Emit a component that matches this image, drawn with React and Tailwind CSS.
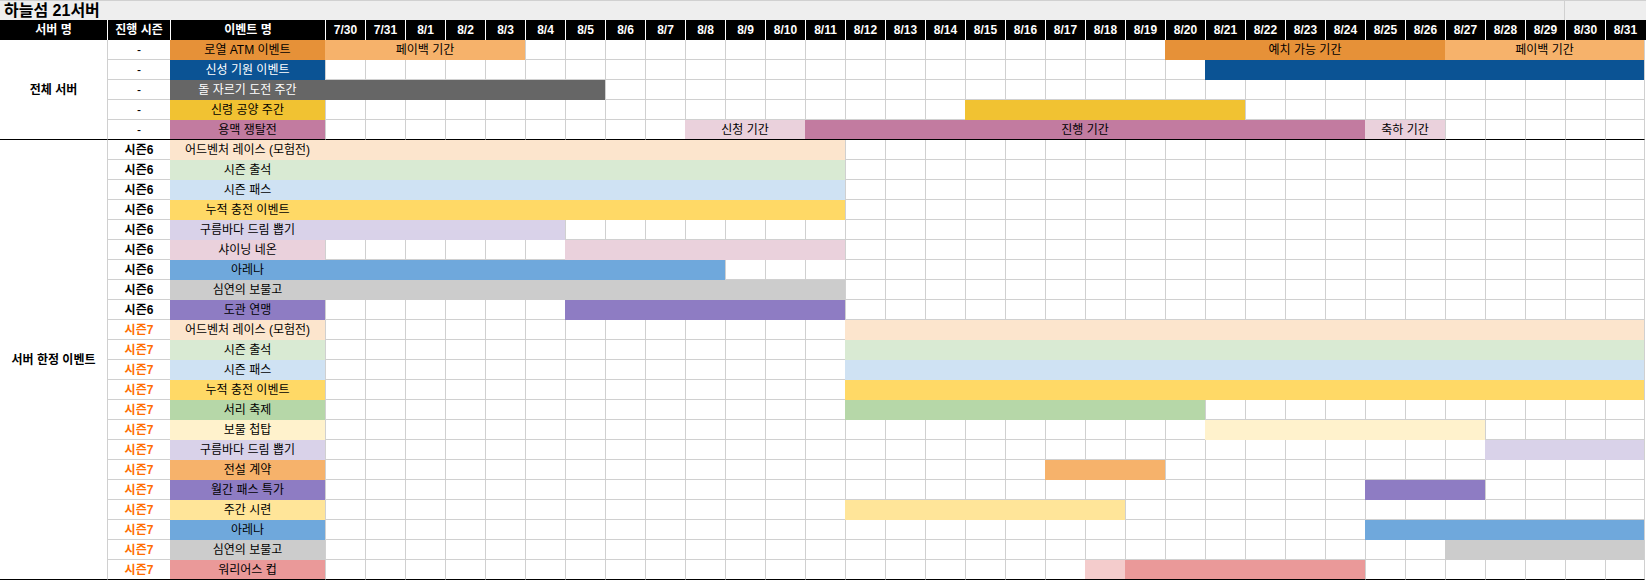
import React from "react";

const days = ["7/30", "7/31", ...Array.from({ length: 31 }, (_, i) => `8/${i + 1}`)];

const globalRows = [
  {
    season: "-",
    name: "로열 ATM 이벤트",
    color: "#e69138",
    bars: [
      { from: 0, to: 4, color: "#f6b26b", label: "페이백 기간" },
      { from: 21, to: 27, color: "#e69138", label: "예치 가능 기간" },
      { from: 28, to: 32, color: "#f6b26b", label: "페이백 기간" },
    ],
  },
  { season: "-", name: "신성 기원 이벤트", color: "#0b5394", light: true, bars: [{ from: 22, to: 32, color: "#0b5394" }] },
  { season: "-", name: "돌 자르기 도전 주간", color: "#666666", light: true, bars: [{ from: 0, to: 6, color: "#666666" }] },
  { season: "-", name: "신령 공양 주간", color: "#f1c232", bars: [{ from: 16, to: 22, color: "#f1c232" }] },
  {
    season: "-",
    name: "용맥 쟁탈전",
    color: "#c27ba0",
    bars: [
      { from: 9, to: 11, color: "#ead1dc", label: "신청 기간" },
      { from: 12, to: 25, color: "#c27ba0", label: "진행 기간" },
      { from: 26, to: 27, color: "#ead1dc", label: "축하 기간" },
    ],
  },
];

const s6 = (name, color, from, to) => ({ season: "시즌6", name, color, bars: [{ from, to, color }] });
const s7 = (name, color, from, to) => ({ season: "시즌7", orange: true, name, color, bars: [{ from, to, color }] });

const serverRows = [
  s6("어드벤처 레이스 (모험전)", "#fce5cd", 0, 12),
  s6("시즌 출석", "#d9ead3", 0, 12),
  s6("시즌 패스", "#cfe2f3", 0, 12),
  s6("누적 충전 이벤트", "#ffd966", 0, 12),
  s6("구름바다 드림 뽑기", "#d9d2e9", 0, 5),
  s6("샤이닝 네온", "#ead1dc", 6, 12),
  s6("아레나", "#6fa8dc", 0, 9),
  s6("심연의 보물고", "#cccccc", 0, 12),
  s6("도관 연맹", "#8e7cc3", 6, 12),
  s7("어드벤처 레이스 (모험전)", "#fce5cd", 13, 32),
  s7("시즌 출석", "#d9ead3", 13, 32),
  s7("시즌 패스", "#cfe2f3", 13, 32),
  s7("누적 충전 이벤트", "#ffd966", 13, 32),
  s7("서리 축제", "#b6d7a8", 13, 21),
  s7("보물 첩탑", "#fff2cc", 22, 28),
  s7("구름바다 드림 뽑기", "#d9d2e9", 29, 32),
  s7("전설 계약", "#f6b26b", 18, 20),
  s7("월간 패스 특가", "#8e7cc3", 26, 28),
  s7("주간 시련", "#ffe599", 13, 19),
  s7("아레나", "#6fa8dc", 26, 32),
  s7("심연의 보물고", "#cccccc", 28, 32),
  {
    season: "시즌7",
    orange: true,
    name: "워리어스 컵",
    color: "#ea9999",
    bars: [
      { from: 19, to: 19, color: "#f4cccc" },
      { from: 20, to: 25, color: "#ea9999" },
    ],
  },
];

function EventRow({ row, last })
{
  const line = last ? "border-b border-black" : "border-b border-[#d0d0d0]";
  const cells = [];

  // walk the 33 days, merging bar ranges into one cell
  for (let k = 0; k < days.length; k++) {
    const bar = row.bars.find((b) => b.from === k);
    if (bar) {
      const span = bar.to - bar.from + 1;
      cells.push(
        <div
          key={k}
          className={`flex items-center justify-center whitespace-nowrap ${last ? "border-b border-black" : ""} ${k + span === days.length ? "border-r border-r-[#d0d0d0]" : ""}`}
          style={{ gridColumn: `span ${span} / span ${span}`, backgroundColor: bar.color }}
        >
          {bar.label}
        </div>
      );
      k = bar.to;
    } else {
      cells.push(
        <div
          key={k}
          className={`border-l border-l-[#d0d0d0] ${line} ${k === days.length - 1 ? "border-r border-r-[#d0d0d0]" : ""}`}
        />
      );
    }
  }

  return (
    <div className="grid grid-cols-[63px_155px_repeat(33,40px)] h-5 text-[12px] text-black">
      <div
        className={`flex items-center justify-center border-l border-l-[#d0d0d0] ${line} ${row.season !== "-" ? "font-bold" : ""} ${row.orange ? "text-[#ff6d01]" : ""}`}
      >
        {row.season}
      </div>
      <div
        className={`flex items-center justify-center whitespace-nowrap ${last ? "border-b border-black" : ""} ${row.light ? "text-white" : ""}`}
        style={{ backgroundColor: row.color }}
      >
        {row.name}
      </div>
      {cells}
    </div>
  );
}

function Section({ title, rows })
{
  return (
    <div className="flex">
      <div className="w-[107px] flex items-center justify-center font-bold text-[12px] border-b border-black">
        {title}
      </div>
      <div className="flex flex-col">
        {rows.map((row, i) => (
          <EventRow key={i} row={row} last={i === rows.length - 1} />
        ))}
      </div>
    </div>
  );
}

export default function App()
{
  return (
    <div className="w-[1646px] h-[581px] bg-white overflow-hidden font-[family-name:'Liberation_Sans','Noto_Sans_CJK_KR',sans-serif]">
      {/* sheet title */}
      <div className="flex h-5 bg-[#eeeeee] border-t border-[#d0d0d0]">
        <div className="w-[1565px] border-r border-[#d0d0d0] pl-1 flex items-center text-[16px] font-bold leading-none">
          하늘섬 21서버
        </div>
      </div>

      {/* column headers */}
      <div className="grid grid-cols-[107px_63px_155px_repeat(33,40px)] h-5 bg-black text-white font-bold text-[12px]">
        <div className="flex items-center justify-center">서버 명</div>
        <div className="flex items-center justify-center border-l border-white">진행 시즌</div>
        <div className="flex items-center justify-center border-l border-white">이벤트 명</div>
        {days.map((d) => (
          <div key={d} className="flex items-center justify-center border-l border-white">
            {d}
          </div>
        ))}
      </div>

      <Section title="전체 서버" rows={globalRows} />
      <Section title="서버 한정 이벤트" rows={serverRows} />
    </div>
  );
}
